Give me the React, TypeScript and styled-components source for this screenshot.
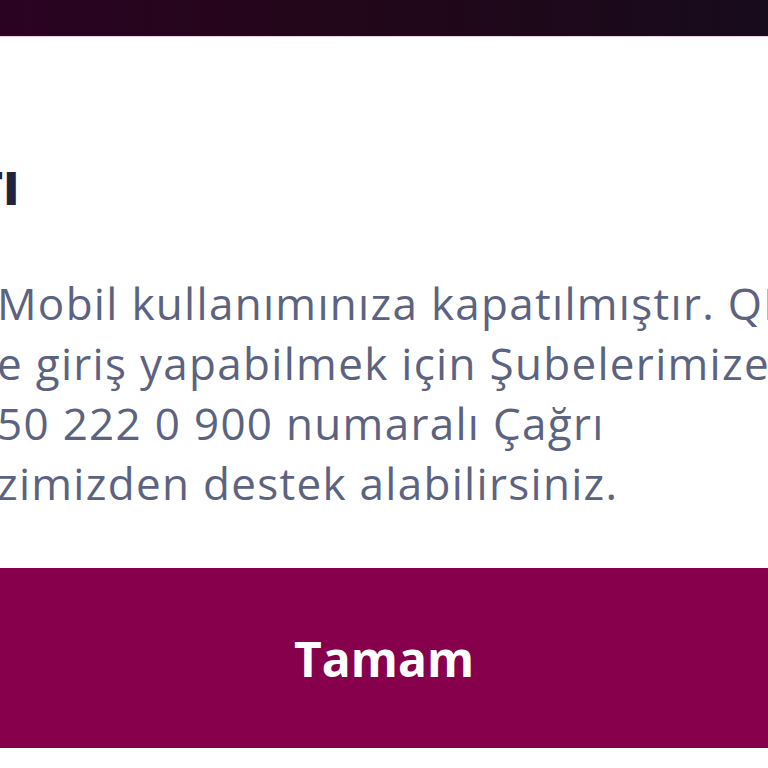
import React from "react";
import styled, { createGlobalStyle } from "styled-components";

const GlobalStyle = createGlobalStyle`
  html, body {
    margin: 0;
    padding: 0;
    background: #ffffff;
  }
  body {
    width: 768px;
    height: 768px;
    overflow: hidden;
    font-family: "Open Sans", Lato, sans-serif;
  }
`;

const Screen = styled.div`
  width: 768px;
  height: 768px;
  display: flex;
  flex-direction: column;
  overflow: hidden;
  background: #ffffff;
`;

const TopBar = styled.div`
  height: 36px;
  flex-shrink: 0;
  background: linear-gradient(90deg, #2a0322 0%, #220619 45%, #170b1c 100%);
  border-bottom: 1px solid #e9cfe0;
`;

const Dialog = styled.div`
  flex: 1;
  display: flex;
  flex-direction: column;
  background: #ffffff;
  overflow: hidden;
`;

const Title = styled.h2`
  margin: 124px 0 0 -24px;
  font-size: 46px;
  line-height: 52px;
  font-weight: 800;
  color: #1f2340;
  white-space: nowrap;
`;

const Message = styled.p`
  margin: 60px 0 0 -3px;
  font-size: 44px;
  line-height: 60px;
  font-weight: 400;
  letter-spacing: 1.3px;
  color: #5c6380;
  white-space: nowrap;
`;

const Line = styled.span`
  display: block;
`;

const OkButton = styled.button`
  margin-top: auto;
  margin-bottom: 20px;
  height: 180px;
  width: 100%;
  border: none;
  background: #86004c;
  color: #ffffff;
  font-family: "Open Sans", Lato, sans-serif;
  font-size: 48px;
  font-weight: 700;
  cursor: pointer;
`;

const lines = [
  "Mobil kullanımınıza kapatılmıştır. QNB",
  "e giriş yapabilmek için Şubelerimize",
  "50 222 0 900 numaralı Çağrı",
  "zimizden destek alabilirsiniz.",
];

export default function App() {
  return (
    <>
      <GlobalStyle />
      <Screen>
        <TopBar />
        <Dialog>
          <Title>TI</Title>
          <Message>
            {lines.map((l) => (
              <Line key={l}>{l}</Line>
            ))}
          </Message>
          <OkButton>Tamam</OkButton>
        </Dialog>
      </Screen>
    </>
  );
}
